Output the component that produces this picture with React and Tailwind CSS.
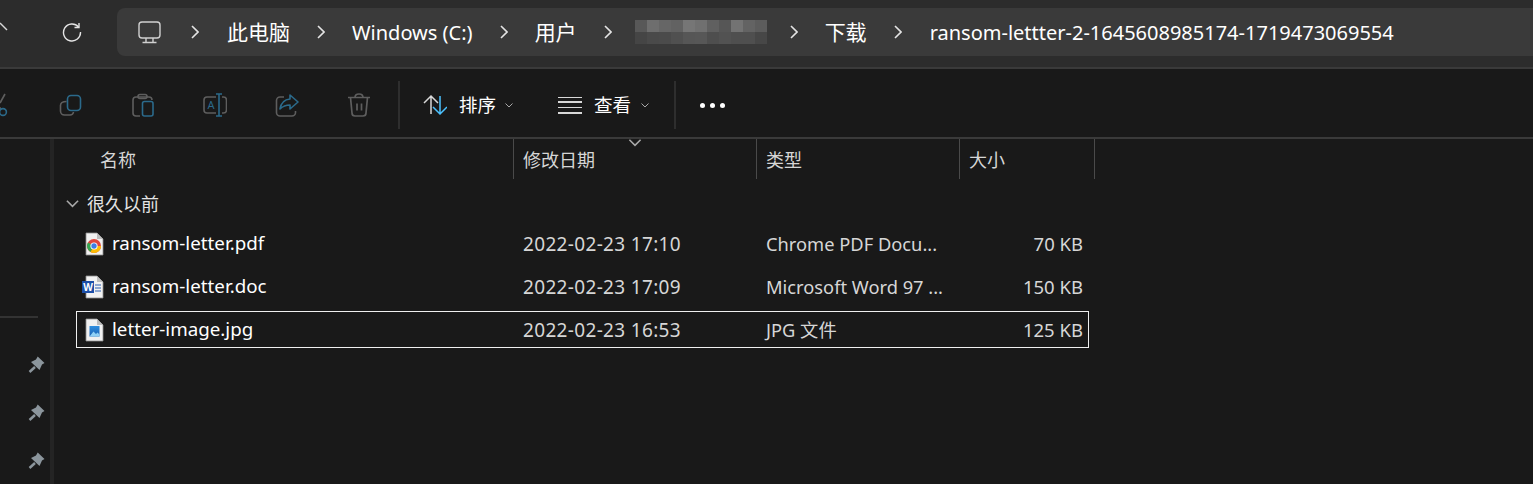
import React from 'react';

const FONT = { fontFamily: '"Noto Sans", "Noto Sans CJK SC", sans-serif' };

const GREY = '#5e5e5e';
const DIM_BLUE = '#2b6a8b';

const Chevron = () => (
  <svg width="8" height="14" viewBox="0 0 8 14" fill="none" stroke="#e4e4e4" strokeWidth="1.6" className="shrink-0">
    <path d="M1 1l6 6-6 6" />
  </svg>
);

const SmallDown = ({ color = '#a8a8a8', w = 8, h = 5 }) => (
  <svg width={w} height={h} viewBox="0 0 8 5" fill="none" stroke={color} strokeWidth="1" className="shrink-0">
    <path d="M0.5 0.5L4 4l3.5-3.5" />
  </svg>
);

const Pin = () => (
  <svg width="18" height="18" viewBox="0 0 18 18" fill="#8b959c">
    <path d="M9.700 0.500L16.500 7 14 8.500 11.500 14 3 6 8 3.500z" />
    <path d="M7 11L1.500 16" stroke="#8b959c" strokeWidth="2.500" />
  </svg>
);

const CutIcon = () => (
  <svg width="24" height="24" viewBox="0 0 24 24" fill="none" strokeWidth="1.6">
    <path d="M18 1l-5 9" stroke={GREY} />
    <path d="M8 10l6 6" stroke={GREY} />
    <circle cx="16" cy="19" r="3.4" stroke={DIM_BLUE} />
  </svg>
);

const CopyIcon = () => (
  <svg width="24" height="24" viewBox="0 0 24 24" fill="none" strokeWidth="1.6">
    <path d="M7.5 8.5C3.5 8.5 1.5 10 1.5 12.5V18a4 4 0 0 0 4 4H11a3.5 3.5 0 0 0 3.500-3" stroke={GREY} />
    <rect x="8.500" y="2.500" width="13" height="15" rx="3.500" stroke={DIM_BLUE} />
  </svg>
);

const PasteIcon = () => (
  <svg width="24" height="24" viewBox="0 0 24 24" fill="none" strokeWidth="1.6">
    <path d="M9 23H5a3 3 0 0 1-3-3V7a3 3 0 0 1 3-3h13a3 3 0 0 1 3 3" stroke={GREY} />
    <rect x="7" y="1.500" width="9" height="4" rx="2" stroke={GREY} />
    <rect x="11.500" y="8.500" width="10.500" height="14.500" rx="2" stroke={DIM_BLUE} />
  </svg>
);

const RenameIcon = () => (
  <svg width="24" height="24" viewBox="0 0 24 24" fill="none" strokeWidth="1.6">
    <path d="M13 4H4a3 3 0 0 0-3 3v10a3 3 0 0 0 3 3h9" stroke={GREY} />
    <path d="M19 4h1.500a3 3 0 0 1 3 3v10a3 3 0 0 1-3 3H19" stroke={GREY} />
    <path d="M13 1h6M16 1v22M13 23h6" stroke={DIM_BLUE} />
    <text x="8" y="16" textAnchor="middle" fontSize="11" fill={DIM_BLUE} stroke="none" style={FONT}>A</text>
  </svg>
);

const ShareIcon = () => (
  <svg width="24" height="24" viewBox="0 0 24 24" fill="none" strokeWidth="1.6">
    <path d="M9 4H5a3.500 3.500 0 0 0-3.500 3.500v12A3.500 3.500 0 0 0 5 23h12a3.500 3.500 0 0 0 3.500-3.500V18" stroke={GREY} />
    <path d="M15 2l8 7-8 7v-4c-4 0-7 1-10 4 1-6 4-9.500 10-10z" stroke={DIM_BLUE} strokeLinejoin="round" />
  </svg>
);

const TrashIcon = () => (
  <svg width="24" height="24" viewBox="0 0 24 24" fill="none" strokeWidth="1.7" stroke={GREY}>
    <path d="M1 4.500h22M8 4.500C8 2.500 9.500 1 12 1s4 1.500 4 3.500" />
    <path d="M3.500 4.500L5 20a3 3 0 0 0 3 3h8a3 3 0 0 0 3-3l1.500-15.500" />
    <path d="M10 10.500v7M14.500 10.500v7" />
  </svg>
);

const SortIcon = () => (
  <svg width="24" height="22" viewBox="0 0 24 22" fill="none" strokeWidth="1.5">
    <path d="M8 20V2M1 9l7-7 7 7" stroke="#d8d8d8" />
    <path d="M17 2v18M10 13l7 7 7-7" stroke="#4cc2ff" />
  </svg>
);

const ListIcon = () => (
  <div className="flex flex-col w-6 gap-[3px]">
    <div className="h-[1.5px] bg-[#d8d8d8]" />
    <div className="h-[1.5px] bg-[#d8d8d8] mb-[1px]" />
    <div className="h-[1.5px] bg-[#d8d8d8] mb-[1px]" />
    <div className="h-[1.5px] bg-[#d8d8d8]" />
  </div>
);

const MonitorIcon = () => (
  <svg width="23" height="23" viewBox="0 0 23 23" fill="none" stroke="#d0d0d0" strokeWidth="1.400">
    <rect x="1" y="1" width="21" height="16" rx="3" />
    <path d="M8 17v4M15 17v4M4.500 21.500h14" />
  </svg>
);

const Page = ({ children }) => (
  <svg width="22" height="24" viewBox="0 0 22 24">
    <path d="M3 1h11l6 6v16H3z" fill="#f1f1f1" stroke="#8d8d8d" strokeWidth="0.8" />
    <path d="M14 1v6h6z" fill="#bdbdbd" />
    {children}
  </svg>
);

const ChromeFile = () => (
  <Page>
    <circle cx="11" cy="14" r="7" fill="#e0483e" />
    <path d="M11 14L4.900 10.500A7 7 0 0 0 7.500 20z" fill="#34a853" />
    <path d="M11 14h7A7 7 0 0 1 7.500 20z" fill="#fbbc05" />
    <circle cx="11" cy="14" r="3.600" fill="#fff" />
    <circle cx="11" cy="14" r="2.700" fill="#3d7fe6" />
  </Page>
);

const WordFile = () => (
  <div className="relative w-[22px] h-6">
    <Page>
      <path d="M12 10h6M12 13h6M12 16h6" stroke="#2b5fb3" strokeWidth="1" />
    </Page>
    <div className="absolute -left-[1px] top-[6px] w-[12px] h-[12px] bg-[#1d4fa8] text-white text-[10px] font-bold leading-[12px] text-center">
      W
    </div>
  </div>
);

const ImageFile = () => (
  <Page>
    <defs>
      <linearGradient id="img" x1="0" y1="0" x2="0" y2="1">
        <stop offset="0" stopColor="#2f8fe0" />
        <stop offset="1" stopColor="#1b5fb0" />
      </linearGradient>
    </defs>
    <rect x="6.500" y="8" width="10" height="10.500" fill="url(#img)" />
    <path d="M6.500 18.500l4-5 2.500 2.500 1.500-1.500 2 2v2z" fill="#8fd0f5" />
  </Page>
);

const topBlur = ['#585858', '#6e6e6e', '#666666', '#626262', '#767676', '#707070', '#606060', '#565656', '#737373', '#636363', '#5c5c5c'];
const bottomBlur = ['#454545', '#4a4a4a', '#4b4b4b', '#505050', '#565656', '#575757', '#4e4e4e', '#525252', '#4f4f4f', '#4f4f4f', '#474747'];

const BlurredName = () => (
  <div className="w-[132px] shrink-0 -mx-1">
    <div className="flex h-3">
      {topBlur.map((c, i) => (
        <div key={i} className="flex-1" style={{ backgroundColor: c }} />
      ))}
    </div>
    <div className="flex h-3">
      {bottomBlur.map((c, i) => (
        <div key={i} className="flex-1" style={{ backgroundColor: c }} />
      ))}
    </div>
  </div>
);

const files = [
  { name: 'ransom-letter.pdf', date: '2022-02-23 17:10', type: 'Chrome PDF Docu...', size: '70 KB', Icon: ChromeFile },
  { name: 'ransom-letter.doc', date: '2022-02-23 17:09', type: 'Microsoft Word 97 ...', size: '150 KB', Icon: WordFile },
  { name: 'letter-image.jpg', date: '2022-02-23 16:53', type: 'JPG 文件', size: '125 KB', Icon: ImageFile, selected: true },
];

const App = () => {
  return (
    <div className="w-[1533px] h-[484px] overflow-hidden bg-[#191919] text-[#e6e6e6] flex flex-col" style={FONT}>
      {/* Address bar */}
      <div className="h-[67px] shrink-0 bg-[#2c2c2c] flex items-center pb-[3px] text-white text-[20px]">
        <svg width="8" height="10" viewBox="0 0 8 10" fill="none" stroke="#d8d8d8" strokeWidth="1.400" className="shrink-0 -mt-[10px]">
          <path d="M0 1l7 7" />
        </svg>
        <svg width="20" height="20" viewBox="0 0 20 20" fill="none" stroke="#e4e4e4" strokeWidth="1.400" className="shrink-0 ml-[54px]">
          <path d="M16.500 5A8.500 8.500 0 1 0 18.500 10" />
          <path d="M17 1v4.500h-4.500" />
        </svg>
        <div className="ml-[35px] flex-1 h-12 bg-[#3a3a3a] rounded-l-lg flex items-center pl-[21px] gap-[27px] whitespace-nowrap">
          <MonitorIcon />
          <div className="ml-[3px]">
            <Chevron />
          </div>
          <span className="ml-[1px] mt-[2px] text-[21px]">此电脑</span>
          <Chevron />
          <span className="mt-[2px]">Windows (C:)</span>
          <Chevron />
          <span className="mt-[2px] text-[21px]">用户</span>
          <Chevron />
          <BlurredName />
          <Chevron />
          <span className="mt-[2px] text-[21px]">下载</span>
          <Chevron />
          <span className="ml-[1px] mt-[2px]">ransom-lettter-2-1645608985174-1719473069554</span>
        </div>
      </div>
      <div className="h-[2px] shrink-0 bg-[#3a3a3a]" />

      {/* Command bar */}
      <div className="h-[68px] shrink-0 flex items-center pt-1 text-[18.5px] text-white">
        <div className="flex items-center -ml-[37px]">
          {[CutIcon, CopyIcon, PasteIcon, RenameIcon, ShareIcon, TrashIcon].map((Icon, i) => (
            <div key={i} className="w-[72px] flex justify-center">
              <Icon />
            </div>
          ))}
        </div>
        <div className="w-[2px] h-12 bg-[#2e2e2e] ml-[3px]" />
        <div className="ml-[23px]">
          <SortIcon />
        </div>
        <span className="ml-3">排序</span>
        <div className="ml-[9px]">
          <SmallDown />
        </div>
        <div className="ml-[45px]">
          <ListIcon />
        </div>
        <span className="ml-3">查看</span>
        <div className="ml-[10px]">
          <SmallDown />
        </div>
        <div className="w-[2px] h-12 bg-[#2e2e2e] ml-[25px]" />
        <div className="flex gap-[5px] ml-[24px]">
          <div className="w-[5px] h-[5px] rounded-full bg-white" />
          <div className="w-[5px] h-[5px] rounded-full bg-white" />
          <div className="w-[5px] h-[5px] rounded-full bg-white" />
        </div>
      </div>
      <div className="h-[2px] shrink-0 bg-[#3a3a3a]" />

      <div className="flex-1 flex min-h-0">
        {/* Nav pane */}
        <div className="w-[50px] shrink-0 pt-[177px]">
          <div className="h-[2px] w-[38px] bg-[#333333]" />
          <div className="mt-[38px] flex flex-col gap-[30px] items-end pr-1">
            <Pin />
            <Pin />
            <Pin />
          </div>
        </div>
        <div className="w-1 shrink-0 bg-[#242424]" />

        {/* File list */}
        <div className="flex-1 min-w-0">
          <div className="relative h-10 flex text-[18px] text-[#d6d6d6]">
            <div className="w-[459px] pl-[46px] pt-[2px] flex items-center">名称</div>
            <div className="w-[243px] pl-[9px] pt-[2px] flex items-center border-l border-[#4a4a4a]">修改日期</div>
            <div className="w-[203px] pl-[9px] pt-[2px] flex items-center border-l border-[#4a4a4a]">类型</div>
            <div className="w-[136px] pl-[9px] pt-[2px] flex items-center border-x border-[#4a4a4a]">大小</div>
            <div className="absolute left-[574px] top-0">
              <SmallDown w={14} h={8} />
            </div>
          </div>

          <div className="h-[46px] pt-1 flex items-center pl-3 text-[18px] text-[#e4e4e4]">
            <SmallDown w={13} h={8} />
            <span className="ml-2">很久以前</span>
          </div>

          <div className="flex flex-col gap-[6px] ml-[22px] w-[1013px] text-[18.5px]">
            {files.map((f) => (
              <div
                key={f.name}
                className={`h-[37px] flex items-center border ${f.selected ? 'border-[#f0f0f0]' : 'border-transparent'}`}
              >
                <div className="w-[446px] flex items-center pl-[6px] text-white">
                  <f.Icon />
                  <span className="ml-[7px] text-[18.75px]">{f.name}</span>
                </div>
                <div className="w-[243px] mt-[2px] text-[#d6d6d6] text-[19px] tracking-[0.33px]">{f.date}</div>
                <div className="w-[203px] text-[#d6d6d6] text-[18.3px] whitespace-nowrap">{f.type}</div>
                <div className="w-[114px] text-right text-[#d6d6d6]">{f.size}</div>
              </div>
            ))}
          </div>
        </div>
      </div>
    </div>
  );
};

export default App;
